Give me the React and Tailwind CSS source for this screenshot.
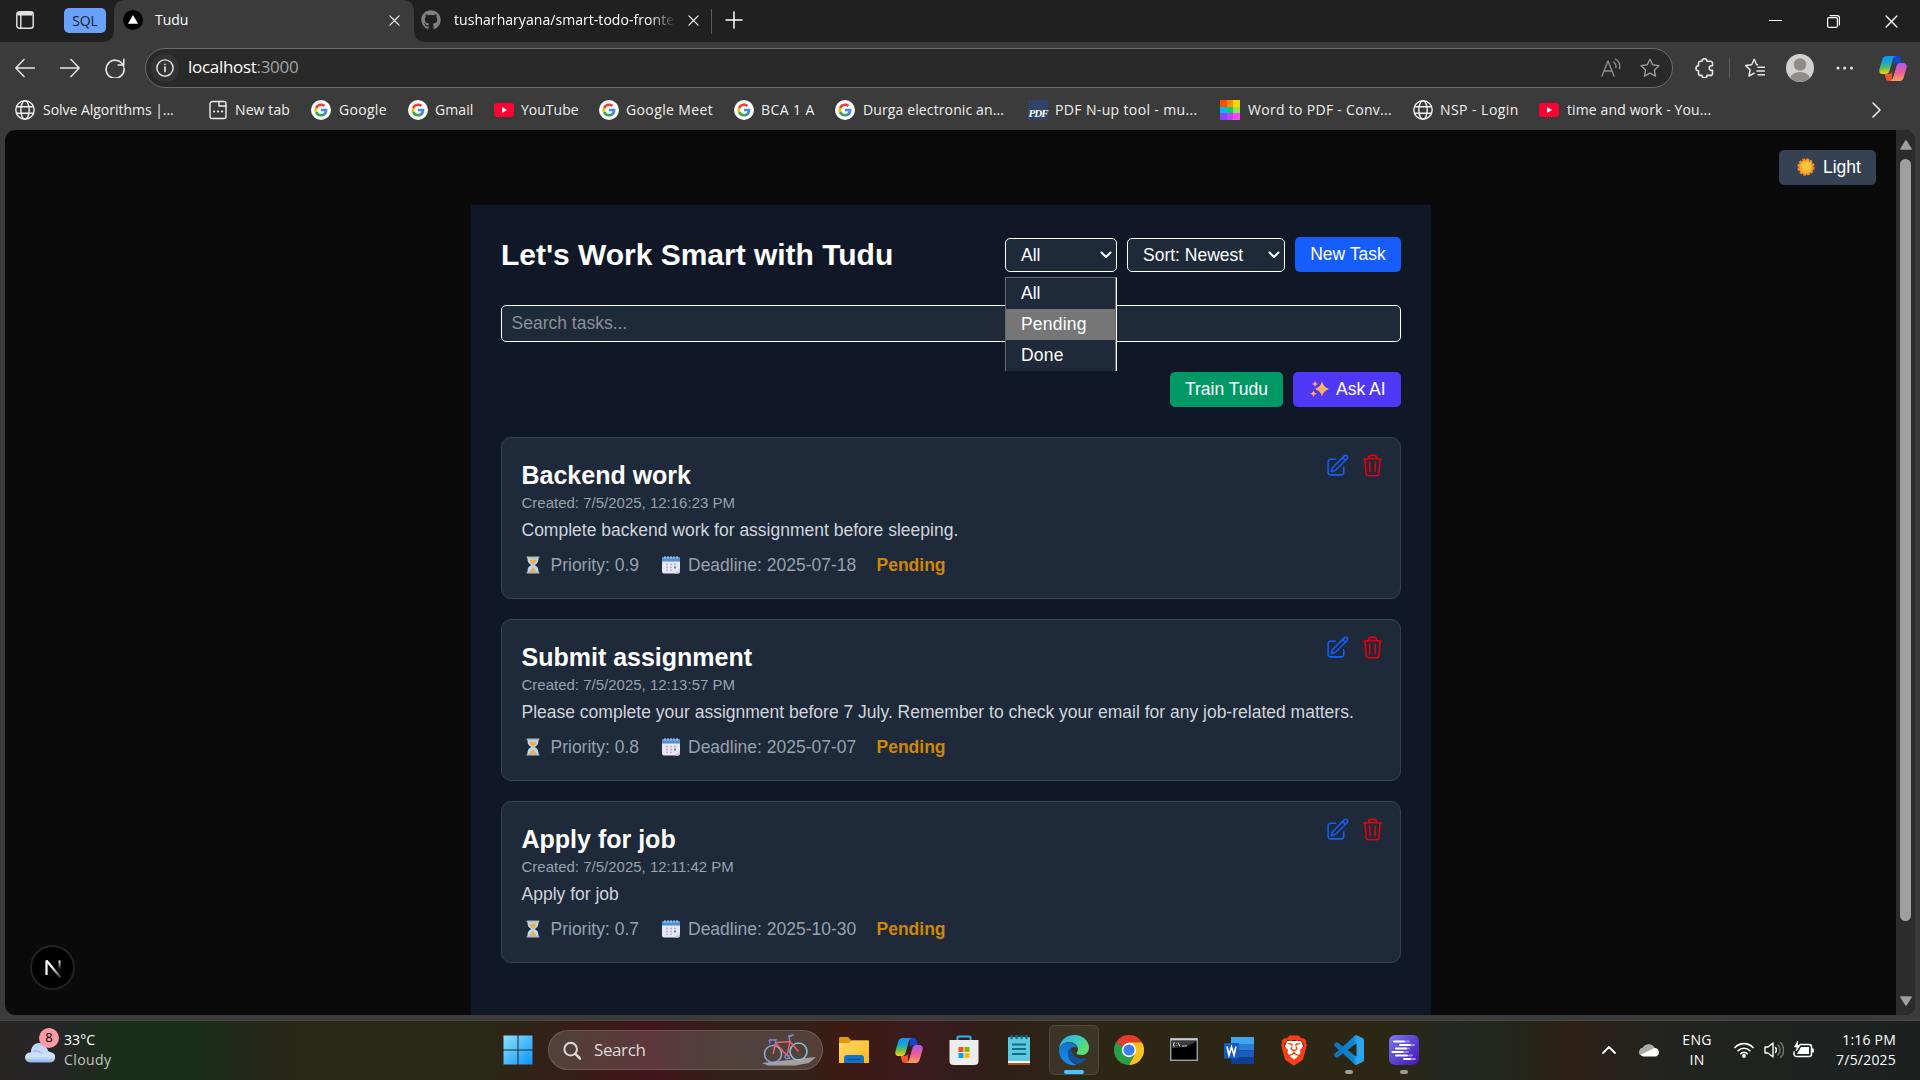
import React from "react";
import { FaGithub } from "react-icons/fa";
import { SiBrave } from "react-icons/si";

/* ---------- small icons ---------- */
const Line = ({ w = 20, h = 20, vb = "0 0 20 20", sw = 1.4, className = "", children }) => (
  <svg width={w} height={h} viewBox={vb} fill="none" stroke="currentColor" strokeWidth={sw} strokeLinecap="round" strokeLinejoin="round" className={"shrink-0 " + className}>
    {children}
  </svg>
);

const Globe = () => (
  <Line>
    <circle cx="10" cy="10" r="9.2" />
    <ellipse cx="10" cy="10" rx="4.2" ry="9.2" />
    <path d="M1.8 6.7h16.4M1.8 13.3h16.4" />
  </Line>
);

const NewTabIcon = () => (
  <Line w={18} h={20} vb="0 0 18 20">
    <path d="M1 4a2.500 2.500 0 0 1 2.500-2.500H10V6h7v10.500a2 2 0 0 1-2 2H3a2 2 0 0 1-2-2Z" />
    <path d="M10 1.500h5a2 2 0 0 1 2 2V6" />
    <path d="M5 11.500h.1M9 11.500h.1M13 11.500h.1" strokeWidth="2.200" />
  </Line>
);

const Google = () => (
  <svg width="20" height="20" viewBox="0 0 20 20" className="shrink-0">
    <circle cx="10" cy="10" r="10" fill="#fff" />
    <g transform="translate(2.800 2.800) scale(.6)">
      <path fill="#4285F4" d="M22.560 12.250c0-.78-.07-1.530-.2-2.250H12v4.260h5.920c-.26 1.370-1.040 2.530-2.210 3.310v2.770h3.570c2.080-1.920 3.280-4.740 3.280-8.090z" />
      <path fill="#34A853" d="M12 23c2.970 0 5.460-.98 7.280-2.660l-3.570-2.770c-.98.66-2.230 1.060-3.710 1.060-2.860 0-5.290-1.930-6.160-4.530H2.180v2.840C3.990 20.530 7.700 23 12 23z" />
      <path fill="#FBBC05" d="M5.840 14.090c-.22-.66-.35-1.360-.35-2.090s.13-1.430.35-2.090V7.070H2.180C1.430 8.550 1 10.220 1 12s.43 3.450 1.180 4.930l3.660-2.840z" />
      <path fill="#EA4335" d="M12 5.380c1.620 0 3.060.56 4.210 1.640l3.150-3.150C17.450 2.090 14.970 1 12 1 7.700 1 3.990 3.470 2.180 7.070l3.660 2.840c.87-2.600 3.300-4.530 6.160-4.530z" />
    </g>
  </svg>
);

const YouTube = () => (
  <svg width="20" height="20" viewBox="0 0 20 20" className="shrink-0">
    <rect x="0" y="3" width="20" height="14" rx="3" fill="#ff0033" />
    <path d="M8 7l5 3-5 3z" fill="#fff" />
  </svg>
);

const PdfIcon = () => (
  <span className="flex h-5 w-5 shrink-0 items-end justify-center bg-[#2f4468]">
    <span className="font-['Liberation_Serif',serif] text-[11px] font-bold italic leading-[13px] tracking-[-1px] text-white">PDF</span>
  </span>
);

const ColourGrid = () => (
  <span className="grid h-5 w-5 shrink-0 grid-cols-3 grid-rows-3">
    <i className="bg-[#ff4d00]" /><i className="bg-[#ff8c00]" /><i className="bg-[#ffd500]" />
    <i className="bg-[#00b8ff]" /><i className="bg-[#00d563]" /><i className="bg-[#8ce84a]" />
    <i className="bg-[#8b45ff]" /><i className="bg-[#c03fff]" /><i className="bg-[#ff45ff]" />
  </span>
);

const CloseX = ({ s = 11 }) => (
  <Line w={s} h={s} vb="0 0 12 12" sw={1.3}>
    <path d="M1 1l10 10M11 1L1 11" />
  </Line>
);

const Copilot = ({ id }) => (
  <svg width="28" height="27" viewBox="0 0 28 27" className="shrink-0">
    <defs>
      <linearGradient id={id + "a"} x1="0" y1="0" x2="0" y2="1">
        <stop offset="0" stopColor="#1790f0" /><stop offset=".35" stopColor="#12a5dd" /><stop offset=".65" stopColor="#5bbd5a" /><stop offset="1" stopColor="#f6d20a" />
      </linearGradient>
      <linearGradient id={id + "b"} x1="0" y1="0" x2="0" y2="1">
        <stop offset="0" stopColor="#a65df2" /><stop offset=".5" stopColor="#ee5a99" /><stop offset="1" stopColor="#ffa052" />
      </linearGradient>
    </defs>
    <path d="M15 1h3.500c2 0 2.800 1 3.300 3l1 4h-4.500c-2 0-3 .8-3.600 3z" fill="#1748c9" />
    <path d="M13 26H10c-2 0-2.900-1-3.400-3l-1-4h4c2 0 3-.8 3.600-3z" fill="#f0562b" />
    <path d="M8 1h8.500c-1.500.5-2.200 2-2.800 4l-3.200 11c-.6 2-1.700 3-3.700 3H4c-3 0-4.300-2-3.500-5L3.300 4.600C4 2.200 5.500 1 8 1z" fill={"url(#" + id + "a)"} />
    <path d="M20 26h-8.500c1.500-.5 2.200-2 2.800-4l3.200-11c.6-2 1.700-3 3.700-3H24c3 0 4.300 2 3.500 5l-2.800 9.400c-.7 2.400-2.200 3.600-4.700 3.600z" fill={"url(#" + id + "b)"} />
  </svg>
);

/* ---------- browser chrome ---------- */
const TabStrip = () => (
  <div className="flex h-[42px] shrink-0 items-center bg-[#202020] text-white">
    <div className="mb-[2px] flex w-16 justify-start pl-4">
      <svg width="18" height="18" viewBox="0 0 18 18" fill="none" stroke="#e6e6e6">
        <rect x=".8" y=".8" width="16.400" height="16.400" rx="2.500" strokeWidth="1.400" />
        <path d="M1.500 2.800h15" strokeWidth="3.400" />
        <path d="M4.800 4v13" strokeWidth="1.400" />
      </svg>
    </div>
    <div className="mb-px flex h-[25px] w-[42px] items-center justify-center rounded-[5px] bg-[#6aa1fa] pb-px text-[14px] tracking-[-0.2px] text-[#101c33]">SQL</div>
    <div className="relative ml-2 flex h-full w-[300px] items-center rounded-t-[10px] bg-[#3b3b3b] pb-[2px] pl-[9px]">
      <span className="absolute -left-[10px] bottom-0 h-[10px] w-[10px] bg-[radial-gradient(circle_at_0_0,transparent_9.5px,#3b3b3b_10px)]" />
      <span className="absolute -right-[10px] bottom-0 h-[10px] w-[10px] bg-[radial-gradient(circle_at_100%_0,transparent_9.5px,#3b3b3b_10px)]" />
      <svg width="20" height="20" viewBox="0 0 20 20">
        <circle cx="10" cy="10" r="10" fill="#000" />
        <path d="M10 5l5 8.700H5z" fill="#fff" />
      </svg>
      <span className="mb-[2px] ml-3 w-[234px] text-[14px] text-white">Tudu</span>
      <CloseX />
    </div>
    <div className="flex items-center pb-[2px] pl-[7px] text-white">
      <FaGithub size={20} className="text-[#808080]" />
      <span className="mb-[2px] ml-[13px] w-[222px] whitespace-nowrap text-[14px] tracking-[0.05px] [mask-image:linear-gradient(to_right,black_88%,transparent)]">tusharharyana/smart-todo-fronte</span>
      <span className="ml-3"><CloseX /></span>
    </div>
    <div className="ml-3 h-[25px] w-px bg-[#5c5c5c]" />
    <div className="mb-[2px] ml-[13px] flex-1">
      <Line w={18} h={18} vb="0 0 18 18" sw={1.500}><path d="M9 1v16M1 9h16" /></Line>
    </div>
    <div className="flex items-center gap-[45px] pr-[22px] text-white">
      <Line w={13} h={13} vb="0 0 13 13" sw={1.100}><path d="M0 5.500h13" /></Line>
      <Line w={13} h={13} vb="0 0 13 13" sw={1.200}>
        <rect x=".6" y="2.600" width="9.800" height="9.800" rx="1.500" />
        <path d="M3 .6h7.200a2.200 2.200 0 0 1 2.200 2.200V10" />
      </Line>
      <CloseX s={13} />
    </div>
  </div>
);

const Star = "M10 1.200l2.700 5.600 6.200.85-4.500 4.300 1.100 6.150L10 15.150 4.500 18.100l1.100-6.150-4.500-4.300 6.200-.85z";

const Toolbar = () => (
  <div className="flex h-[52px] shrink-0 items-center bg-[#3b3b3b] text-[#e6e6e6]">
    <div className="flex w-[145px] items-center gap-[25px] pb-px pl-[15px]">
      <Line sw={1.500}><path d="M19.500 10H1M9 1.500L.8 10 9 18.500" /></Line>
      <Line sw={1.500}><path d="M.5 10H19M11 1.500l8.200 8.500-8.200 8.500" /></Line>
      <Line sw={1.600}><path d="M18.600 8.300A9 9 0 1 0 19 10M18.800 1.300V7h-5.600" /></Line>
    </div>
    <div className="flex h-10 w-[1528px] items-center rounded-full border border-[#6b6b6b] bg-[#292929] pl-[5px] pr-3">
      <div className="flex h-7 w-7 items-center justify-center rounded-full bg-[#333]">
        <Line w={18} h={18} vb="0 0 20 20" sw={1.600}><circle cx="10" cy="10" r="9" /><path d="M10 9v5M10 6v.1" strokeWidth="1.900" /></Line>
      </div>
      <span className="mb-[2px] ml-[9px] flex-1 text-[17px] tracking-[-0.3px] text-white">localhost<span className="text-[#a2a2a2]">:3000</span></span>
      <Line className="mb-px mr-[19px] text-[#8c8c8c]">
        <path d="M1 18L7 3l6 15M3 13h8M12.500 4a5 5 0 0 1 2.300 5.500M14.500 1a9 9 0 0 1 4 9.500" />
      </Line>
      <Line className="text-[#9a9a9a]"><path d={Star} /></Line>
    </div>
    <div className="flex flex-1 items-center pl-[22px]">
      <Line sw={1.600}>
        <path d="M7 3.200a2.500 2.500 0 0 1 5 0h3.500a2 2 0 0 1 2 2v2.600h-1a2.300 2.300 0 0 0 0 4.600h1v3a2 2 0 0 1-2 2H12a2.500 2.500 0 0 1-5 0H5.500a2 2 0 0 1-2-2v-2.700a2.500 2.500 0 0 1 0-5V5.200a2 2 0 0 1 2-2z" />
      </Line>
      <div className="ml-[14px] h-5 w-px bg-[#5c5c5c]" />
      <Line className="ml-[15px]" sw={1.500}>
        <path d="M12.500 6.800h-.8L9.200 1.300 6.700 6.800l-6 .8 4.400 4.200L4 18l5.200-2.800M13 9.200h6.500M12 13h7.500M13 16.800h6.500" />
      </Line>
      <svg width="28" height="28" viewBox="0 0 28 28" className="ml-[21px]">
        <defs><clipPath id="avatar"><circle cx="14" cy="14" r="14" /></clipPath></defs>
        <g clipPath="url(#avatar)">
          <rect width="28" height="28" fill="#d2d0ce" />
          <circle cx="14" cy="10.500" r="6.200" fill="#8f8b88" />
          <ellipse cx="14" cy="25" rx="10" ry="7" fill="#8f8b88" />
        </g>
      </svg>
      <svg width="18" height="4" viewBox="0 0 18 4" className="ml-[22px]" fill="#e6e6e6"><circle cx="2" cy="2" r="1.500" /><circle cx="8.700" cy="2" r="1.500" /><circle cx="15.500" cy="2" r="1.500" /></svg>
      <div className="ml-[25px]"><Copilot id="tb" /></div>
    </div>
  </div>
);

const Mark = ({ w, icon, t = "", children }) => (
  <div className={"flex shrink-0 items-center gap-[7px] whitespace-nowrap text-[14px] " + w}>
    {icon}
    <span className={"mb-[2px] " + t}>{children}</span>
  </div>
);

const Bookmarks = () => (
  <div className="flex h-9 shrink-0 items-center bg-[#3b3b3b] pb-[4px] pl-[15px] text-[#f0f0f0]">
    <Mark w="w-[194px]" t="ml-px tracking-[-0.03px]" icon={<Globe />}>Solve Algorithms |...</Mark>
    <Mark w="w-[102px]" t="ml-px tracking-[0.1px]" icon={<NewTabIcon />}>New tab</Mark>
    <Mark w="w-[97px]" t="ml-px tracking-[0.3px]" icon={<Google />}>Google</Mark>
    <Mark w="w-[86px]" t="tracking-[0.1px]" icon={<Google />}>Gmail</Mark>
    <Mark w="w-[105px]" icon={<YouTube />}>YouTube</Mark>
    <Mark w="w-[135px]" t="tracking-[0.38px]" icon={<Google />}>Google Meet</Mark>
    <Mark w="w-[101px]" t="tracking-[0.4px]" icon={<Google />}>BCA 1 A</Mark>
    <Mark w="w-[193px]" t="ml-px tracking-[0.12px]" icon={<Google />}>Durga electronic an...</Mark>
    <Mark w="w-[192px]" t="tracking-[0.36px]" icon={<PdfIcon />}>PDF N-up tool - mu...</Mark>
    <Mark w="w-[193px]" t="ml-px tracking-[0.3px]" icon={<ColourGrid />}>Word to PDF - Conv...</Mark>
    <Mark w="w-[126px]" t="tracking-[0.45px]" icon={<Globe />}>NSP - Login</Mark>
    <Mark w="w-[333px]" t="ml-px tracking-[0.12px]" icon={<YouTube />}>time and work - You...</Mark>
    <Line w={9} h={16} vb="0 0 9 16" sw={1.600}><path d="M1 1l7 7-7 7" /></Line>
  </div>
);

/* ---------- emoji-like drawings ---------- */
const Sun = () => (
  <svg width="18" height="18" viewBox="0 0 18 18">
    <circle cx="9" cy="9" r="7.900" fill="none" stroke="#f0832b" strokeWidth="1.600" strokeDasharray="2.800 1.330" />
    <circle cx="9" cy="9" r="7.500" fill="#f28f2b" />
    <circle cx="9" cy="9" r="6.300" fill="#f9b233" />
    <circle cx="9.600" cy="8" r="4.600" fill="#fcc63a" />
  </svg>
);
const Sparkles = () => (
  <svg width="19" height="18" viewBox="0 0 19 18">
    <defs><linearGradient id="spk" x1="0" y1="0" x2="0" y2="1"><stop offset="0" stopColor="#ffd45c" /><stop offset="1" stopColor="#ff8f6b" /></linearGradient></defs>
    <g fill="url(#spk)">
      <path d="M12 1c.8 4 2.500 6.200 7 8-4.500 1.800-6.200 4-7 8-.8-4-2.500-6.200-7-8 4.500-1.800 6.200-4 7-8z" />
      <path d="M5 .800c.5 2 1 2.700 3 3.200-2 .5-2.500 1.200-3 3.200-.5-2-1-2.700-3-3.200 2-.5 2.500-1.200 3-3.200z" />
      <path d="M3.500 10.300c.6 2.300 1.100 2.800 3.500 3.400-2.400.6-2.900 1.100-3.500 3.400-.6-2.300-1.100-2.800-3.500-3.400 2.400-.6 2.900-1.100 3.500-3.400z" />
    </g>
  </svg>
);
const Hourglass = () => (
  <svg width="14" height="18" viewBox="0 0 14 18">
    <path d="M1.500 2h11c0 4-1 5.500-4 7 3 1.500 4 3 4 7h-11c0-4 1-5.500 4-7-3-1.500-4-3-4-7z" fill="#b9dcf5" />
    <path d="M3.300 3.500h7.400c-.4 2.800-1.400 3.900-3.700 5.100C4.700 7.400 3.700 6.300 3.300 3.500zM7 11.500c1.500 1 3 2.500 3.500 4.500h-7c.5-2 2-3.500 3.500-4.500z" fill="#f3ad4a" />
    <path d="M6.700 8h.6v5h-.6z" fill="#f3ad4a" />
    <path d="M.7 .500h12.600v1.800H.7zM.7 15.700h12.600v1.800H.7z" fill="#b3b6ba" />
  </svg>
);
const Calendar = () => (
  <svg width="18" height="18" viewBox="0 0 18 18">
    <rect y="1" width="18" height="16.500" rx="2" fill="#e9e5f5" />
    <path d="M0 5.500V3a2 2 0 0 1 2-2h14a2 2 0 0 1 2 2v2.500z" fill="#4a8fd6" />
    <path d="M3 0v3M6 0v3M9 0v3M12 0v3M15 0v3" stroke="#cfd8ea" strokeWidth="1" />
    <g fill="#a9a7c4">
      <path d="M4.200 7.800h1.600v1.500H4.200zM8.200 7.800h1.600v1.500H8.200zM12.200 7.800h1.600v1.500h-1.600zM4.200 10.800h1.600v1.500H4.200zM8.200 10.800h1.600v1.500H8.200zM4.200 13.800h1.600v1.300H4.200zM8.200 13.800h1.600v1.300H8.200z" />
    </g>
    <path d="M12 10.500h2v2h-2z" fill="#3f8ad8" />
    <path d="M18 12.500v3a2 2 0 0 1-2 2h-3z" fill="#cdc8e2" />
  </svg>
);

/* ---------- app page ---------- */
const EditIcon = () => (
  <svg width="25" height="25" viewBox="0 0 24 24" fill="none" stroke="#155dfc" strokeWidth="1.500" strokeLinecap="round" strokeLinejoin="round">
    <path d="m16.862 4.487 1.687-1.688a1.875 1.875 0 1 1 2.652 2.652L10.582 16.070a4.500 4.500 0 0 1-1.897 1.130L6 18l.8-2.685a4.500 4.500 0 0 1 1.130-1.897l8.932-8.931Zm0 0L19.500 7.125M18 14v4.750A2.250 2.250 0 0 1 15.750 21H5.250A2.250 2.250 0 0 1 3 18.750V8.250A2.250 2.250 0 0 1 5.250 6H10" />
  </svg>
);
const TrashIcon = () => (
  <svg width="25" height="25" viewBox="0 0 24 24" fill="none" stroke="#e7000b" strokeWidth="1.500" strokeLinecap="round" strokeLinejoin="round">
    <path d="m14.740 9-.346 9m-4.788 0L9.260 9m9.968-3.210c.342.052.682.107 1.022.166m-1.022-.165L18.160 19.673a2.250 2.250 0 0 1-2.244 2.077H8.084a2.250 2.250 0 0 1-2.244-2.077L4.772 5.790m14.456 0a48.108 48.108 0 0 0-3.478-.397m-12 .562c.34-.059.68-.114 1.022-.165m0 0a48.110 48.110 0 0 1 3.478-.397m7.500 0v-.916c0-1.180-.91-2.164-2.090-2.201a51.964 51.964 0 0 0-3.320 0c-1.180.037-2.090 1.022-2.090 2.201v.916m7.500 0a48.667 48.667 0 0 0-7.500 0" />
  </svg>
);

const tasks = [
  { title: "Backend work", created: "7/5/2025, 12:16:23 PM", text: "Complete backend work for assignment before sleeping.", p: "0.9", d: "2025-07-18" },
  { title: "Submit assignment", created: "7/5/2025, 12:13:57 PM", text: "Please complete your assignment before 7 July. Remember to check your email for any job-related matters.", p: "0.8", d: "2025-07-07" },
  { title: "Apply for job", created: "7/5/2025, 12:11:42 PM", text: "Apply for job", p: "0.7", d: "2025-10-30" },
];

const Task = ({ t }) => (
  <div className="relative h-[162px] rounded-[10px] border border-gray-700 bg-[#1e2939] py-5 pl-[19.5px] pr-5">
    <div className="absolute right-[15px] top-[15px] flex gap-[10px]"><EditIcon /><TrashIcon /></div>
    <h2 className="text-[25px] font-bold leading-[35px] text-white">{t.title}</h2>
    <p className="text-[15px] leading-5 text-[#99a1af]">Created: {t.created}</p>
    <p className="mt-[5px] whitespace-nowrap leading-[25px] text-[#d1d5dc]">{t.text}</p>
    <div className="mt-[10px] flex items-center leading-[25px] text-[#99a1af]">
      <span className="mb-[2px] ml-[4.5px] mr-[10.5px]"><Hourglass /></span>
      <span className="w-[111px]">Priority: {t.p}</span>
      <span className="mb-[2px] w-[26.5px]"><Calendar /></span>
      <span className="w-[188.5px]">Deadline: {t.d}</span>
      <span className="font-bold text-[#d08700]">Pending</span>
    </div>
  </div>
);

const Select = ({ w, children }) => (
  <div className={"relative flex h-[34px] items-center justify-between rounded-[5px] border border-white bg-[#1e2939] pl-[15px] pr-[4px] text-white " + w}>
    <span>{children}</span>
    <Line w={12} h={8} vb="0 0 12 8" sw={2}><path d="M1.500 1.500L6 6l4.500-4.500" /></Line>
  </div>
);

const Page = () => (
  <div className="flex h-[885px] overflow-hidden rounded-[10px] bg-[#0a0a0a] font-['Liberation_Sans',Arial,sans-serif] text-[17.5px]">
    <div className="relative flex flex-1 justify-center">
      <div className="absolute right-5 top-5 flex h-[35px] w-[97px] items-center rounded-[5px] bg-[#364153] pl-[18px] text-white">
        <span className="mb-px"><Sun /></span><span className="ml-2">Light</span>
      </div>
      <div className="absolute bottom-[25px] left-[25px] flex h-[45px] w-[45px] items-center justify-center rounded-full border-2 border-[#222] bg-black">
        <svg width="18" height="20" viewBox="0 0 18 20" fill="none">
          <defs>
            <linearGradient id="n1" x1="8" y1="9" x2="17" y2="19" gradientUnits="userSpaceOnUse"><stop stopColor="#fff" /><stop offset="1" stopColor="#fff" stopOpacity=".2" /></linearGradient>
            <linearGradient id="n2" x1="15" y1="2" x2="15" y2="12" gradientUnits="userSpaceOnUse"><stop stopColor="#fff" /><stop offset="1" stopColor="#fff" stopOpacity="0" /></linearGradient>
          </defs>
          <path d="M2.500 17V2.500" stroke="#fff" strokeWidth="2.200" />
          <path d="M2.500 2.500l14 17" stroke="url(#n1)" strokeWidth="2.200" />
          <path d="M15.500 2.500v10" stroke="url(#n2)" strokeWidth="2" />
        </svg>
      </div>
      <main className="ml-[1px] mt-[75px] w-[960px] bg-[#101828] px-[30px] pt-[30px]">
        <div className="flex h-10 items-center">
          <h1 className="flex-1 whitespace-nowrap text-[30px] font-bold leading-10 tracking-[-0.02px] text-white">Let&#39;s Work Smart with Tudu</h1>
          <div className="relative">
            <Select w="w-[112px]">All</Select>
            <div className="absolute left-0 top-[39px] z-10 w-[112px] border-l border-t border-r border-l-[#6b6b6b] border-r-white border-t-[#6b6b6b] bg-[#1e2939] leading-[31px] text-white">
              <div className="border-r border-[#6b6b6b]">
                <div className="pl-[15px]">All</div>
                <div className="bg-[#767676] pl-[15px] tracking-[0.2px]">Pending</div>
                <div className="pl-[15px] tracking-[0.2px]">Done</div>
              </div>
            </div>
          </div>
          <div className="ml-[10px]"><Select w="w-[158px]">Sort: Newest</Select></div>
          <div className="mb-[1px] ml-[10px] flex h-[35px] w-[106px] items-center justify-center rounded-[5px] bg-[#155dfc] text-white">New Task</div>
        </div>
        <div className="mt-[30px] flex h-[37px] items-center rounded-[5px] border border-white bg-[#1e2939] pb-px pl-[9.5px] text-[#8b9099]">Search tasks...</div>
        <div className="mt-[30px] flex h-[35px] justify-end gap-[10px] text-white">
          <div className="flex w-[113px] items-center justify-center rounded-[5px] bg-[#009966] pb-px">Train Tudu</div>
          <div className="flex w-[108px] items-center rounded-[5px] bg-[#4f39f6] pb-px pl-[17px]"><Sparkles /><span className="ml-[7px]">Ask AI</span></div>
        </div>
        <div className="mt-[30px] flex flex-col gap-5">
          {tasks.map((t) => <Task key={t.title} t={t} />)}
        </div>
      </main>
    </div>
    <div className="flex w-[19px] flex-col items-center bg-[#2c2c2c] pt-[10px]">
      <svg width="12" height="10" viewBox="0 0 12 10"><path d="M6 1l5 8H1z" fill="#9f9f9f" stroke="#9f9f9f" strokeWidth="1.500" strokeLinejoin="round" /></svg>
      <div className="mt-[9px] h-[762px] w-[11px] rounded-full bg-[#9f9f9f]" />
      <svg width="12" height="10" viewBox="0 0 12 10" className="mt-[75px]"><path d="M6 9L1 1h10z" fill="#9f9f9f" stroke="#9f9f9f" strokeWidth="1.500" strokeLinejoin="round" /></svg>
    </div>
  </div>
);

/* ---------- taskbar ---------- */
const Bike = () => (
  <svg width="54" height="32" viewBox="0 0 54 32" fill="none" className="shrink-0">
    <path d="M0 29l54-6-7 6-14 2.500H6z" fill="#a3a09f" />
    <circle cx="11" cy="20" r="8.500" stroke="#8fa2dd" strokeWidth="1.600" />
    <circle cx="36.500" cy="17.500" r="8.500" stroke="#86c4d2" strokeWidth="1.600" />
    <path d="M11 20l3-11.500 14-1 8.500 10M14 9.500l11 12 3-14" stroke="#e3646f" strokeWidth="1.500" />
    <path d="M7 6h7l-1 5M7 6l1 3.500M30 2l-3 .5L28 8M32 .800l-6 1.500M24 21a2 2 0 1 0 2 0l2 4" stroke="#7f88c9" strokeWidth="1.400" />
  </svg>
);

const Tile = ({ children, active, dot }) => (
  <div className="flex h-full w-[55px] items-center justify-center">
    <div className={"relative flex h-[50px] w-[50px] items-center justify-center rounded-md " + (active ? "border border-white/10 bg-white/[0.07]" : "")}>
      {children}
      {active && <span className="absolute bottom-0 h-1 w-5 rounded-full bg-[#4cc2ff]" />}
      {dot && <span className="absolute bottom-px h-1 w-2 rounded-full bg-[#9a9a96]" />}
    </div>
  </div>
);

const Taskbar = () => (
  <div className="flex h-[60px] items-center border-t border-[#4a4740] bg-[linear-gradient(to_right,#292525_0px,#262626_60px,#173017_125px,#173017_185px,#24291c_240px,#2a2817_300px,#2a2817_490px,#3a1b17_590px,#40151a_650px,#33201a_730px,#33201a_790px,#3c1b12_840px,#3a1b20_925px,#2f2018_1000px,#2d2615_1080px,#2c2615_1390px,#222822_1450px,#24261c_1520px,#2f2117_1565px,#2a211a_1600px,#22231f_1660px,#1c2120_1920px)] pb-px">
    <div className="relative flex w-[490px] items-center pl-[25px]">
      <svg width="30" height="24" viewBox="0 0 30 24" className="mt-[6px]">
        <defs><linearGradient id="cl" x1="0" y1="0" x2="0" y2="1"><stop offset="0" stopColor="#b9cff6" /><stop offset=".7" stopColor="#cfe2fb" /><stop offset="1" stopColor="#86aef0" /></linearGradient></defs>
        <path d="M5 21.500a5 5 0 0 1 0-10h1C6 6 9 2 14 2s8 4 9 8l2 1a5 5 0 0 1 0 10.500z" fill="url(#cl)" />
        <path d="M8 10.500c4-1.500 7 0 9 2.500" stroke="#86a8e8" fill="none" />
      </svg>
      <span className="absolute left-[39px] top-[-2px] flex h-5 w-5 items-center justify-center rounded-full bg-[#ff99a4] text-[13px] text-black">8</span>
      <div className="ml-[9px] text-[14px] leading-5 tracking-[0.4px] text-white"><div className="tracking-[0.1px]">33°C</div><div className="text-[#c2c2c2]">Cloudy</div></div>
    </div>
    <div className="flex h-full w-[58px] items-center justify-center">
      <svg width="30" height="30" viewBox="0 0 30 30" className="mr-[3px]">
        <defs><linearGradient id="win" x1="0" y1="0" x2="1" y2="1"><stop stopColor="#8be2ff" /><stop offset="1" stopColor="#0a94fb" /></linearGradient></defs>
        <path d="M.500 .500h14v14h-14zM15.500 .500h14v14h-14zM.500 15.500h14v14h-14zM15.500 15.500h14v14h-14z" fill="url(#win)" />
      </svg>
    </div>
    <div className="flex h-10 w-[275px] items-center rounded-full border border-white/15 bg-white/15 pl-[14px] pr-[6px] text-[#dcdad9]">
      <Line w={18} h={19} sw={2.200}><circle cx="8.500" cy="8.500" r="7" /><path d="M13.700 13.700L19 19" strokeWidth="2.800" /></Line>
      <span className="ml-[13px] flex-1 text-[17px] tracking-[-0.4px]">Search</span>
      <Bike />
    </div>
    <div className="ml-[3px] flex h-full">
      <Tile>
        <svg width="30" height="28" viewBox="0 0 30 28">
          <defs><linearGradient id="fo" x1="0" y1="0" x2="1" y2="1"><stop stopColor="#ffd868" /><stop offset="1" stopColor="#fbb81a" /></linearGradient></defs>
          <path d="M0 2.500C0 1.500.8 1 1.500 1H9l3.500 3.500H30V14H0z" fill="#dc9a0a" />
          <path d="M0 7h9.500L13 4.500h16a1 1 0 0 1 1 1V27H0z" fill="url(#fo)" />
          <path d="M5 27v-5a3 3 0 0 1 3-3h14a3 3 0 0 1 3 3v5z" fill="#1373c9" /><path d="M8.500 23.500h13" stroke="#0a4a86" strokeWidth="1.200" />
        </svg>
      </Tile>
      <Tile><Copilot id="tk" /></Tile>
      <Tile>
        <svg width="30" height="30" viewBox="0 0 30 30">
          <path d="M8.500 6V2.500A1 1 0 0 1 9.500 1.500h11a1 1 0 0 1 1 1V6" fill="none" stroke="#2cb4ee" strokeWidth="2" />
          <path d="M0.500 5h29v21a4 4 0 0 1-4 4h-21a4 4 0 0 1-4-4z" fill="#ededed" />
          <path d="M9.500 12h5v5h-5z" fill="#f25022" /><path d="M15.500 12h5v5h-5z" fill="#7fba00" /><path d="M9.500 18h5v5h-5z" fill="#00a4ef" /><path d="M15.500 18h5v5h-5z" fill="#ffb900" />
        </svg>
      </Tile>
      <Tile>
        <svg width="22" height="30" viewBox="0 0 22 30">
          <rect y="2" width="22" height="25" rx="1" fill="#5cc9de" /><path d="M0 26h22v2H0z" fill="#f2f2f2" /><path d="M0 28h22v2H0z" fill="#a3571c" />
          <path d="M4 9.500h14M4 14h14M4 19h14" stroke="#0f6f8a" strokeWidth="1.800" />
          <path d="M3.500 1v2M8.500 1v2M13.500 1v2M18.500 1v2" stroke="#0f6f8a" strokeWidth="2.600" strokeLinecap="round" />
        </svg>
      </Tile>
      <Tile active>
        <svg width="30" height="30" viewBox="0 0 30 30">
          <defs>
            <linearGradient id="e1" x1="0" y1="0" x2="1" y2=".5"><stop stopColor="#2aa8e0" /><stop offset=".5" stopColor="#36c6d0" /><stop offset="1" stopColor="#5de06a" /></linearGradient>
            <linearGradient id="e2" x1="0" y1="0" x2="0" y2="1"><stop stopColor="#1172c8" /><stop offset="1" stopColor="#1590ea" /></linearGradient>
          </defs>
          <path d="M0 14C.8 6 7 0 15 0c9 0 15 6 15 12.500 0 5-3.500 7.500-7.500 7.500-3 0-5-1-5-2 0-.6 1.500-1.400 1.500-4 0-3.500-4-7-9-7-4.500 0-8.500 3-10 7z" fill="url(#e1)" />
          <path d="M0 15c.5-4.500 4.500-7.500 9-7.500 4.500 0 8 2.500 9 5-5-2-9 2-9 6.500C9 24 12.500 28 18 30c-1 .1-2 .1-3 .1C6.500 30 0 23.500 0 15z" fill="url(#e2)" />
          <path d="M12 12.500c-3 2-3.500 5-2.800 8C10.500 26 15 29 19 29c4.500-1 7-3.500 8.700-6.500-2 1-4.500 1.500-6.700 1.200-5.500-.7-9-5-9-11.200z" fill="#0f52a0" />
        </svg>
      </Tile>
      <Tile>
        <svg width="30" height="30" viewBox="0 0 30 30">
          <path d="M15 15L2 7.500A15 15 0 0 1 28 7.500z" fill="#e33b2e" />
          <path d="M15 15L2 7.500A15 15 0 0 0 15 30l6-11z" fill="#2a9f4b" />
          <path d="M15 15l6 4-6 11A15 15 0 0 0 28 7.500H15z" fill="#fcc31e" />
          <circle cx="15" cy="15" r="7.200" fill="#fff" /><circle cx="15" cy="15" r="5.600" fill="#3b7ded" />
        </svg>
      </Tile>
      <Tile>
        <svg width="28" height="23" viewBox="0 0 28 23" fill="none" className="mb-[2px]">
          <rect x=".7" y=".7" width="26.600" height="21.600" fill="#000" stroke="#9aa0a6" strokeWidth="1.400" />
          <path d="M1 10C10 10 20 8 27 3H1z" fill="#3a3a3a" />
          <path d="M1 1.500h26" stroke="#c9cdd1" strokeWidth="2" />
          <path d="M5 5H3.500v3H5M6.500 5.500v.5M6.500 7.500v.5M8 4.500l2 4M12 8h5" stroke="#ccc" />
        </svg>
      </Tile>
      <Tile>
        <svg width="30" height="28" viewBox="0 0 30 28">
          <path d="M7 1h23v7H7z" fill="#41a5ee" /><path d="M7 8h23v6.500H7z" fill="#2b7cd3" /><path d="M7 14.500h23V21H7z" fill="#185abd" /><path d="M7 21h23v7H7z" fill="#103f91" />
          <rect y="7" width="15" height="15.500" rx="1" fill="#185abd" />
          <path d="M3 10.500l2 8.500 2.500-8 2.500 8 2-8.500" fill="none" stroke="#fff" strokeWidth="1.700" />
        </svg>
      </Tile>
      <Tile>
        <span className="relative flex h-[30px] w-[30px] items-center justify-center text-[#fb3d16]">
          <svg width="20" height="24" viewBox="0 0 20 24" className="absolute"><path d="M3 3h14l2 5-3 10-6 5-6-5L1 8z" fill="#fff" /></svg>
          <SiBrave size={31} className="relative" />
        </span>
      </Tile>
      <Tile dot>
        <svg width="30" height="30" viewBox="0 0 24 24">
          <defs><linearGradient id="vs" x1="0" y1="0" x2="1" y2="0"><stop offset="0" stopColor="#0b72b9" /><stop offset=".65" stopColor="#0f86d2" /><stop offset=".76" stopColor="#2ba5f2" /></linearGradient></defs>
          <path fill="url(#vs)" d="M23.150 2.587L18.210.210a1.494 1.494 0 0 0-1.705.290l-9.460 8.630-4.120-3.128a.999.999 0 0 0-1.276.057L.327 7.261A1 1 0 0 0 .326 8.740L3.899 12 .326 15.260a1 1 0 0 0 .001 1.479L1.650 17.940a.999.999 0 0 0 1.276.057l4.120-3.128 9.460 8.630a1.492 1.492 0 0 0 1.704.290l4.942-2.377A1.500 1.500 0 0 0 24 20.060V3.939a1.500 1.500 0 0 0-.85-1.352zm-5.146 14.861L10.826 12l7.178-5.448v10.896z" />
        </svg>
      </Tile>
      <Tile dot>
        <svg width="30" height="30" viewBox="0 0 30 30">
          <defs><linearGradient id="pu" x1="0" y1="0" x2="1" y2="1"><stop stopColor="#7a7bee" /><stop offset=".5" stopColor="#5a45cf" /><stop offset="1" stopColor="#4612b5" /></linearGradient></defs>
          <rect width="30" height="30" rx="6" fill="url(#pu)" />
          <path d="M16 6.500h4M20 10h5M16 13.500h4M14 17h5M20 20.500h3M22 24h4" stroke="#9d8ce0" strokeWidth="2" strokeLinecap="round" />
          <path d="M5 6.500h10M11 10h10M7 13.500h10M3.500 17h10M7 20.500h11M15 24h6" stroke="#fff" strokeWidth="2" strokeLinecap="round" />
        </svg>
      </Tile>
    </div>
    <div className="ml-[171px] flex flex-1 items-center text-white">
      <Line w={14} h={8} vb="0 0 14 8" sw={1.800}><path d="M1 7l6-6 6 6" /></Line>
      <svg width="20" height="14" viewBox="0 0 20 14" className="ml-[23px]">
        <path d="M4.500 13.500A4.500 4.500 0 0 1 4 4.700 6.500 6.500 0 0 1 15.500 5a4.300 4.300 0 0 1 1 8.500z" fill="#fff" />
        <path d="M4 4.700A6.500 6.500 0 0 1 15.500 5L1 12a4.500 4.500 0 0 1 3-7.300z" fill="#a9a9a9" />
      </svg>
      <div className="ml-[17px] w-[42px] text-center text-[14px] leading-5 tracking-[0.3px]"><div>ENG</div><div>IN</div></div>
      <Line w={20} h={16} vb="0 0 20 16" sw={1.600} className="ml-[16px]"><path d="M1 5.500a12.500 12.500 0 0 1 18 0M4 8.700a8.400 8.400 0 0 1 12 0M6.800 11.700a4.500 4.500 0 0 1 6.400 0" /><circle cx="10" cy="14" r="1.100" fill="currentColor" /></Line>
      <Line w={20} h={18} vb="0 0 20 18" sw={1.400} className="ml-[10px]"><path d="M1 6v6h3l5 4V2L4 6zM11.500 6.500a4 4 0 0 1 0 5" /><path d="M14 4a7 7 0 0 1 0 10M16.500 1.500a10.500 10.500 0 0 1 0 15" stroke="#777" /></Line>
      <Line w={21} h={17} vb="0 0 21 17" sw={1.500} className="mb-[2px] ml-[9px]"><path d="M7 3.500h9a2.500 2.500 0 0 1 2.500 2.500v7a2.500 2.500 0 0 1-2.500 2.500H3.500A2.500 2.500 0 0 1 1 13v-2M20 8v3" /><path d="M8 6h8v7H4z" fill="currentColor" stroke="none" /><path d="M4.500 .500L1.500 6h3L3 10l4-5.500H4.500z" fill="currentColor" strokeWidth=".8" /></Line>
      <div className="flex-1 pr-[24px] text-right text-[14px] leading-5 tracking-[0.2px]"><div>1:16 PM</div><div>7/5/2025</div></div>
    </div>
  </div>
);

export default function App() {
  return (
    <div className="flex h-[1080px] w-[1920px] flex-col overflow-hidden bg-[#3b3b3b] font-['Open_Sans','Noto_Sans',sans-serif]">
      <TabStrip />
      <Toolbar />
      <Bookmarks />
      <div className="mb-[5px] px-[5px]"><Page /></div>
      <Taskbar />
    </div>
  );
}
